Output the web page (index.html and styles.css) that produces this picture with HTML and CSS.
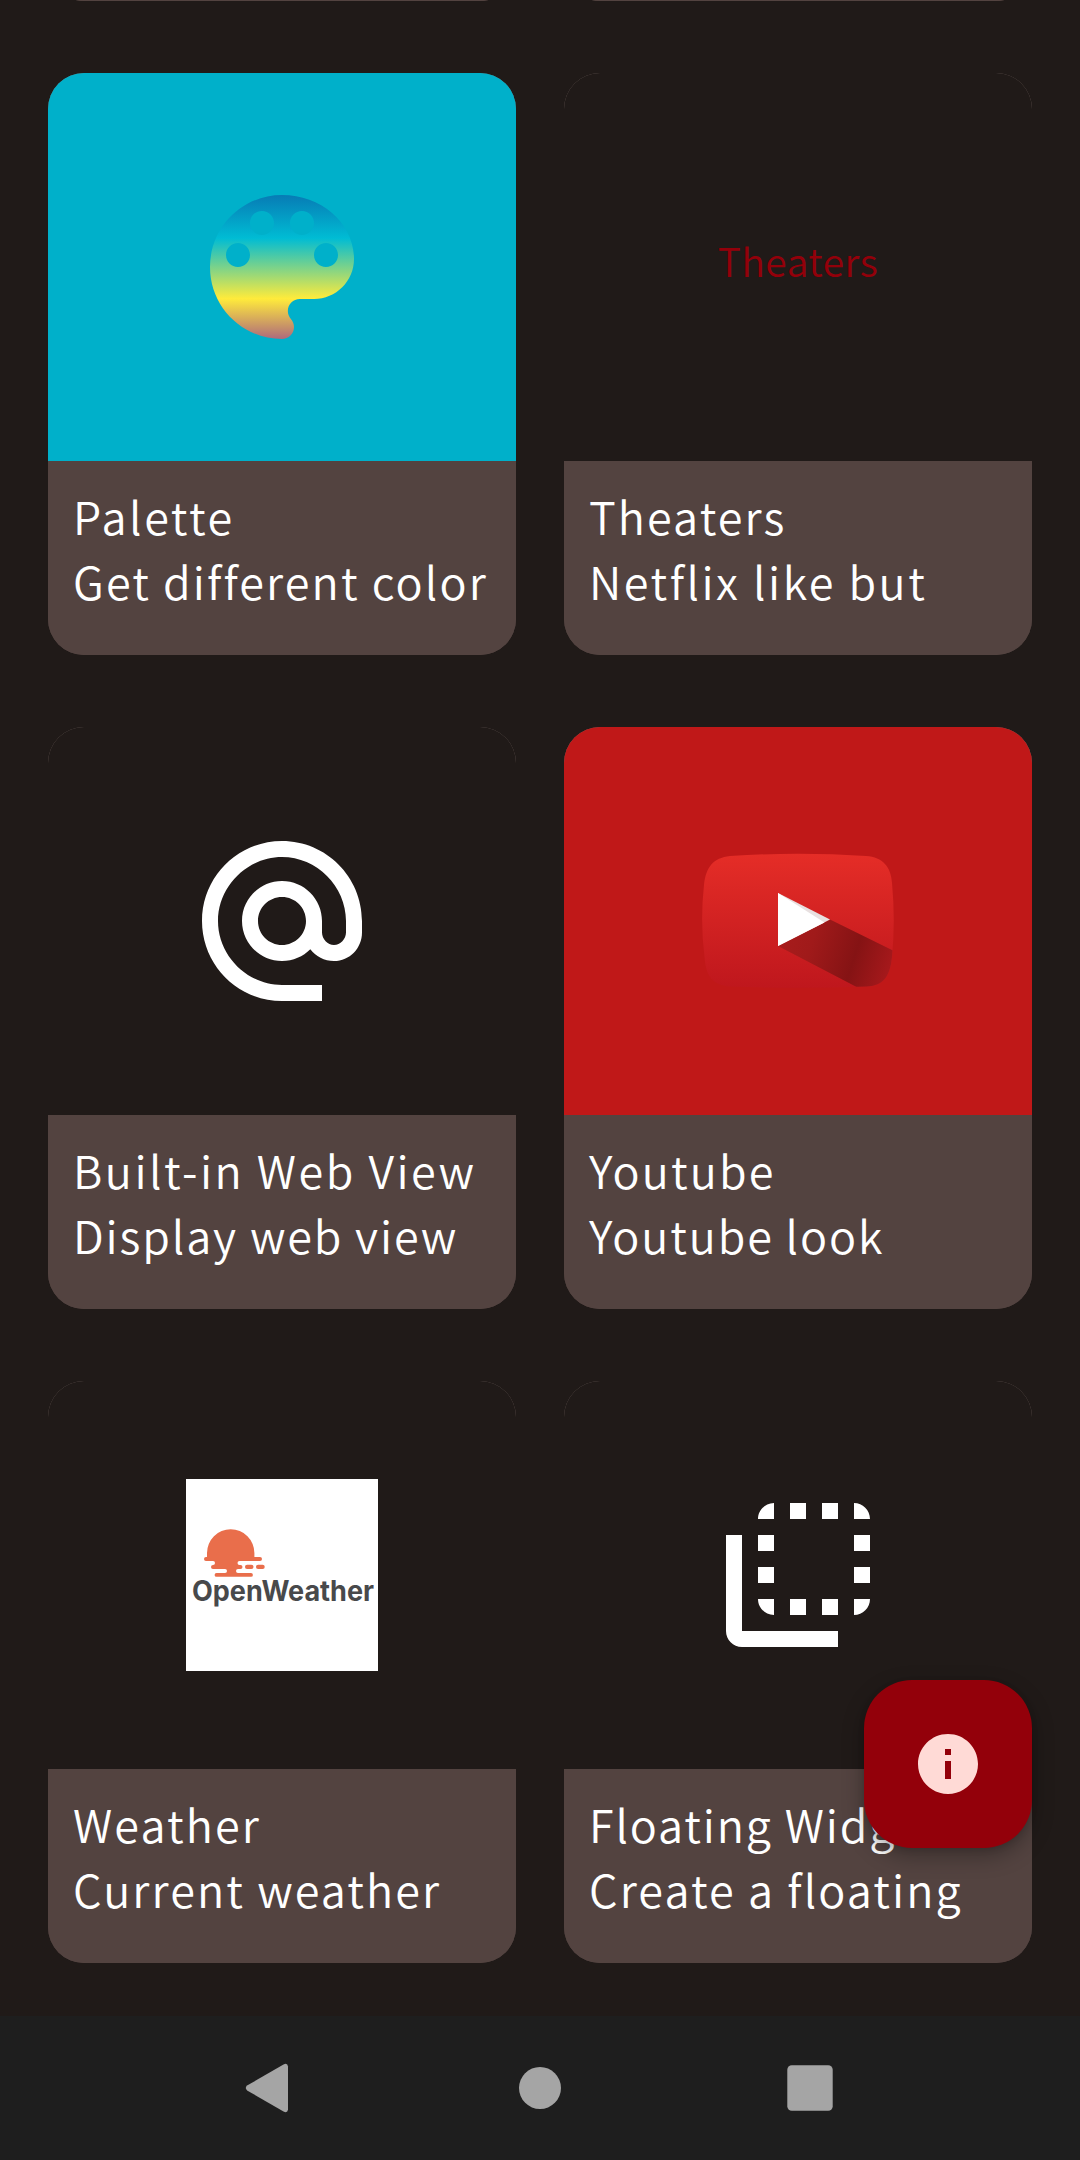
FILE: index.html
```html
<!DOCTYPE html>
<html lang="en">
<head>
<meta charset="utf-8">
<title>Components</title>
<link rel="stylesheet" href="styles.css">
</head>
<body>
<main class="list">
  <div class="grid">
    <article class="card"><div class="media"></div><div class="body"></div></article>
    <article class="card"><div class="media"></div><div class="body"></div></article>

    <article class="card">
      <div class="media media-cyan">
        <svg class="icon" viewBox="0 0 24 24">
          <defs><linearGradient id="pal" gradientUnits="userSpaceOnUse" x1="0" y1="3" x2="0" y2="21"><stop offset="0" stop-color="#077bb5"/><stop offset=".3" stop-color="#00bcd4"/><stop offset=".72" stop-color="#ffeb3b"/><stop offset="1" stop-color="#ae6a7c"/></linearGradient></defs>
          <path fill="url(#pal)" d="M12 3c-4.97 0-9 4.03-9 9s4.03 9 9 9c.83 0 1.5-.67 1.5-1.5 0-.39-.15-.74-.39-1.01-.23-.26-.38-.61-.38-.99 0-.83.67-1.5 1.5-1.5H16c2.76 0 5-2.24 5-5 0-4.42-4.03-8-9-8zm-5.5 9c-.83 0-1.5-.67-1.5-1.5S5.67 9 6.5 9 8 9.670 8 10.500 7.330 12 6.500 12zm3-4C8.670 8 8 7.330 8 6.500S8.670 5 9.500 5s1.500.67 1.500 1.500S10.330 8 9.500 8zm5 0c-.83 0-1.500-.67-1.500-1.500S13.670 5 14.500 5s1.500.67 1.500 1.500S15.330 8 14.500 8zm3 4c-.83 0-1.500-.67-1.500-1.500S16.670 9 17.500 9s1.500.67 1.500 1.500-.67 1.500-1.500 1.500z"/>
        </svg>
      </div>
      <div class="body"><p class="wide">Palette</p><p>Get different color</p></div>
    </article>

    <article class="card">
      <div class="media"><span class="poster">Theaters</span></div>
      <div class="body"><p>Theaters</p><p class="wide">Netflix like but</p></div>
    </article>

    <article class="card">
      <div class="media">
        <svg class="icon" viewBox="0 -.05 24 24"><path fill="#fff" d="M12 1.95c-5.52 0-10 4.48-10 10s4.48 10 10 10h5v-2h-5c-4.34 0-8-3.66-8-8s3.66-8 8-8 8 3.66 8 8v1.43c0 .79-.71 1.57-1.5 1.57s-1.5-.78-1.5-1.57v-1.43c0-2.76-2.24-5-5-5s-5 2.24-5 5 2.24 5 5 5c1.38 0 2.64-.56 3.54-1.47.65.89 1.77 1.47 2.96 1.47 1.97 0 3.5-1.6 3.5-3.57v-1.43c0-5.52-4.48-10-10-10zm0 13c-1.66 0-3-1.34-3-3s1.34-3 3-3 3 1.34 3 3-1.34 3-3 3z"/></svg>
      </div>
      <div class="body"><p class="wide">Built-in Web View</p><p class="tight">Display web view</p></div>
    </article>

    <article class="card">
      <div class="media media-red">
        <svg class="icon" viewBox="0 0 192 192">
          <defs>
            <linearGradient id="yt" x1="0" y1="0" x2="0" y2="1"><stop offset="0" stop-color="#e52d27"/><stop offset="1" stop-color="#bf171d"/></linearGradient>
            <linearGradient id="sh" gradientUnits="userSpaceOnUse" x1="78" y1="110" x2="190" y2="146"><stop offset="0" stop-color="#a81c1c"/><stop offset=".28" stop-color="#a01a1a"/><stop offset=".66" stop-color="#851314"/><stop offset="1" stop-color="#a8191c"/></linearGradient>
            <clipPath id="tube"><path d="M28 31Q96 26.500 164 31C181 32 189 42 190 58Q193.500 96 190 132C188 152 181 161 164 161.500Q96 164 28 161.500C11 160 4 152 2.500 132Q-2 96 2 60C4 42 11 33 28 31Z"/></clipPath>
          </defs>
          <path fill="url(#yt)" d="M28 31Q96 26.500 164 31C181 32 189 42 190 58Q193.500 96 190 132C188 152 181 161 164 161.500Q96 164 28 161.500C11 160 4 152 2.500 132Q-2 96 2 60C4 42 11 33 28 31Z"/>
          <path clip-path="url(#tube)" fill="url(#sh)" d="M76 121L128 94.500L192 126V170H170Z"/>
          <path fill="#e8e0e0" d="M76 68L128 94.500L76 121Z"/>
          <path fill="#fff" d="M76 68L122.500 97.500L76 121Z"/>
        </svg>
      </div>
      <div class="body"><p>Youtube</p><p class="tight">Youtube look</p></div>
    </article>

    <article class="card">
      <div class="media">
        <svg class="icon" viewBox="0 0 192 192">
          <rect width="192" height="192" fill="#fff"/>
          <g fill="#e96e4b">
            <path d="M21 78V74a23.700 23.700 0 0 1 47.400 0v4H74a2 2 0 0 1 0 4H53.500a2 2 0 0 0 0 4H54.500a2 2 0 0 1 0 4H52a2 2 0 0 0 0 4H65a1.800 1.800 0 0 1 0 3.800H30.500a1.800 1.800 0 0 1 0-3.800H39a2 2 0 0 0 0-4H27a2 2 0 0 1 0-4H27a2 2 0 0 0 0-4H20a2 2 0 0 1 0-4Z"/>
            <rect x="59" y="85.700" width="8.500" height="4.300" rx="2.100"/>
            <rect x="70" y="85.700" width="8.700" height="4.300" rx="2.100"/>
          </g>
          <text class="logo" x="6" y="121.500" textLength="182" lengthAdjust="spacingAndGlyphs">OpenWeather</text>
        </svg>
      </div>
      <div class="body"><p>Weather</p><p>Current weather</p></div>
    </article>

    <article class="card">
      <div class="media">
        <svg class="icon" viewBox="0 0 24 24"><path fill="#fff" d="M9 7H7v2h2V7zm0 4H7v2h2v-2zm0-8c-1.110 0-2 .9-2 2h2V3zm4 12h-2v2h2v-2zm6-12v2h2c0-1.100-.9-2-2-2zm-6 0h-2v2h2V3zM9 17v-2H7c0 1.100.89 2 2 2zm10-4h2v-2h-2v2zm0-4h2V7h-2v2zm0 8c1.100 0 2-.9 2-2h-2v2zM5 7H3v12c0 1.100.89 2 2 2h12v-2H5V7zm10-2h2V3h-2v2zm0 12h2v-2h-2v2z"/></svg>
      </div>
      <div class="body"><p class="tight">Floating Widget</p><p>Create a floating</p></div>
    </article>
  </div>
  <button class="fab" aria-label="Info">
    <svg viewBox="0 0 24 24" width="72" height="72"><path fill="#ffdad6" d="M12 2C6.480 2 2 6.480 2 12s4.480 10 10 10 10-4.480 10-10S17.520 2 12 2zm1 15h-2v-6h2v6zm0-8h-2V7h2v2z"/></svg>
  </button>
</main>
<nav class="nav">
  <svg viewBox="0 0 60 60"><path fill="#a5a5a5" d="M7.500 27.300L43.500 6.500Q47.500 4.500 48 8.500V51.500Q47.500 55.500 43.500 53.500L7.500 32.700Q4 30 7.500 27.300Z"/></svg>
  <svg viewBox="0 0 60 60"><circle cx="30" cy="30" r="21" fill="#a5a5a5"/></svg>
  <svg viewBox="0 0 60 60"><rect x="7.300" y="7.300" width="45.400" height="45.400" rx="4.500" fill="#a5a5a5"/></svg>
</nav>
</body>
</html>
```
FILE: styles.css
```css
* { box-sizing: border-box; }
body {
  margin: 0;
  height: 2160px;
  display: flex;
  flex-direction: column;
  overflow: hidden;
  background: #201a18;
  color: #fff;
  font-family: "Noto Sans CJK JP", "Noto Sans", sans-serif;
  font-weight: 350;
}
p { margin: 0; }
.list {
  position: relative;
  flex: none;
  height: 2016px;
  display: flex;
  flex-direction: column;
  justify-content: flex-end;
  padding: 0 48px 53px;
  overflow: hidden;
}
.grid {
  flex: none;
  display: grid;
  grid-template-columns: 1fr 1fr;
  gap: 72px 48px;
}
.card {
  height: 582px;
  border-radius: 36px;
  overflow: hidden;
  background: linear-gradient(#756763 100px, #534340 100px);
}
.media {
  height: 388px;
  display: flex;
  align-items: center;
  justify-content: center;
  background: #201a18;
}
.media-cyan { background: #00b0ca; }
.media-red { background: #c01818; }
.icon { display: block; width: 192px; height: 192px; overflow: visible; }
.poster {
  color: #93000a;
  font-size: 39px;
  line-height: 56px;
  letter-spacing: .5px;
  padding-bottom: 14px;
}
.body {
  height: 194px;
  padding: 22px 0 0 25px;
  background: #534340;
  font-size: 45px;
  line-height: 65px;
  letter-spacing: 2.100px;
  white-space: nowrap;
}
.wide { letter-spacing: 2.500px; }
.tight { letter-spacing: 1.850px; }
.logo { font: 700 28px Inter, sans-serif; fill: #48494b; }
.fab {
  position: absolute;
  right: 48px;
  bottom: 168px;
  width: 168px;
  height: 168px;
  display: flex;
  align-items: center;
  justify-content: center;
  padding: 0;
  border: 0;
  border-radius: 48px;
  background: #93000a;
  box-shadow: 0 8px 22px rgba(0, 0, 0, .3), 0 2px 6px rgba(0, 0, 0, .1);
}
.nav {
  flex: 1;
  display: flex;
  align-items: center;
  justify-content: center;
  gap: 210px;
  background: #1e1e1e;
}
.nav svg { width: 60px; height: 60px; }
```
